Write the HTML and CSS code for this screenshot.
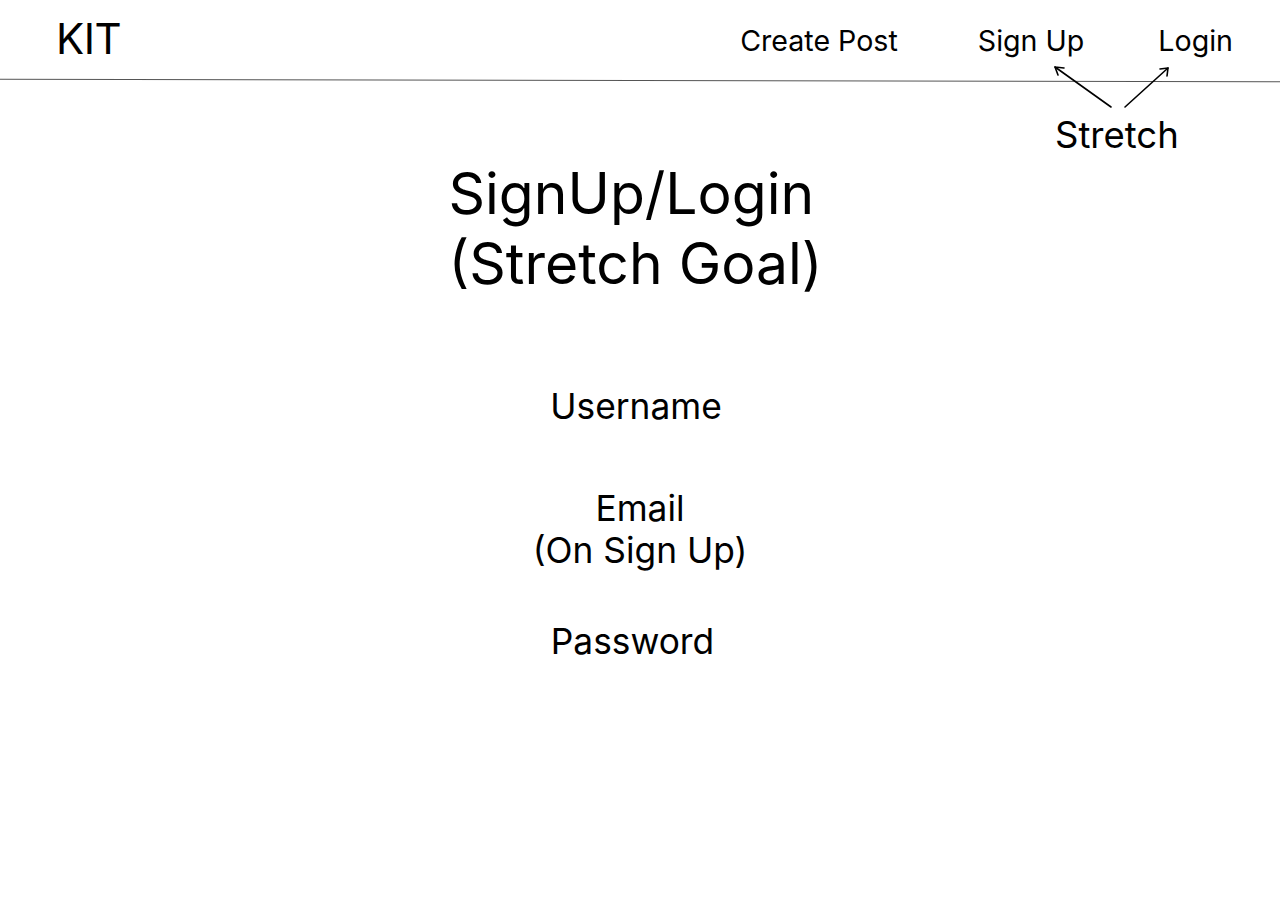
FILE: index.html
```html
<!DOCTYPE html>
<html lang="en">
<head>
<meta charset="utf-8">
<title>KIT - SignUp/Login</title>
<link rel="stylesheet" href="styles.css">
</head>
<body>
<header class="topbar">
  <div class="brand">KIT</div>
  <nav class="nav">
    <a class="nav-link create" href="#">Create Post</a>
    <a class="nav-link signup" href="#">Sign Up</a>
    <a class="nav-link login" href="#">Login</a>
  </nav>
</header>
<div class="rule"></div>
<div class="annotation">
  <svg class="arrows" width="140" height="50" viewBox="0 0 140 50" fill="none" stroke="#000" stroke-width="1.6" stroke-linecap="round">
    <path d="M61 44 L5 4"/>
    <path d="M5 4 L14 5 M5 4 L8 12"/>
    <path d="M75 44 L118 5"/>
    <path d="M118 5 L110 6 M118 5 L117 13"/>
  </svg>
  <div class="annotation-text">Stretch</div>
</div>
<main class="content">
  <h1 class="title">SignUp/Login<br>(Stretch Goal)</h1>
  <div class="fields">
    <div class="field username">Username</div>
    <div class="field email">Email<br>(On Sign Up)</div>
    <div class="field password">Password</div>
  </div>
</main>
</body>
</html>
```
FILE: styles.css
```css
html, body {
  margin: 0;
  padding: 0;
  background: #fff;
  color: #000;
  font-family: "Inter", "Noto Sans", sans-serif;
}
body {
  position: relative;
  width: 1280px;
  height: 906px;
  overflow: hidden;
}
.topbar {
  display: flex;
  align-items: center;
  justify-content: space-between;
  height: 80px;
  padding: 0 47px 0 56px;
  box-sizing: border-box;
}
.brand {
  font-size: 42px;
  font-weight: 400;
  letter-spacing: -0.5px;
  margin-top: -4px;
}
.nav {
  display: flex;
  align-items: center;
  margin-top: 0;
}
.nav-link {
  color: #000;
  text-decoration: none;
  font-size: 28.6px;
}
.signup { margin-left: 80px; }
.login { margin-left: 74px; }
.rule {
  height: 1px;
  background: #555;
  transform: rotate(0.12deg);
}
.annotation {
  position: absolute;
  left: 1050px;
  top: 63px;
  width: 140px;
}
.arrows { display: block; }
.annotation-text {
  font-size: 36.5px;
  margin-top: 0;
  margin-left: 5px;
}
.content {
  display: flex;
  flex-direction: column;
  align-items: center;
  padding-top: 78px;
}
.title {
  margin: 0 0 0 -9px;
  font-size: 57px;
  font-weight: 400;
  line-height: 70px;
  text-align: left;
}
.fields {
  display: flex;
  flex-direction: column;
  align-items: center;
  margin-top: 87px;
}
.field {
  font-size: 35.3px;
  line-height: 42px;
  text-align: center;
}
.username { margin-left: -8px; }
.email { margin-top: 60px; }
.password { margin-top: 49px; margin-left: -15px; }
```
